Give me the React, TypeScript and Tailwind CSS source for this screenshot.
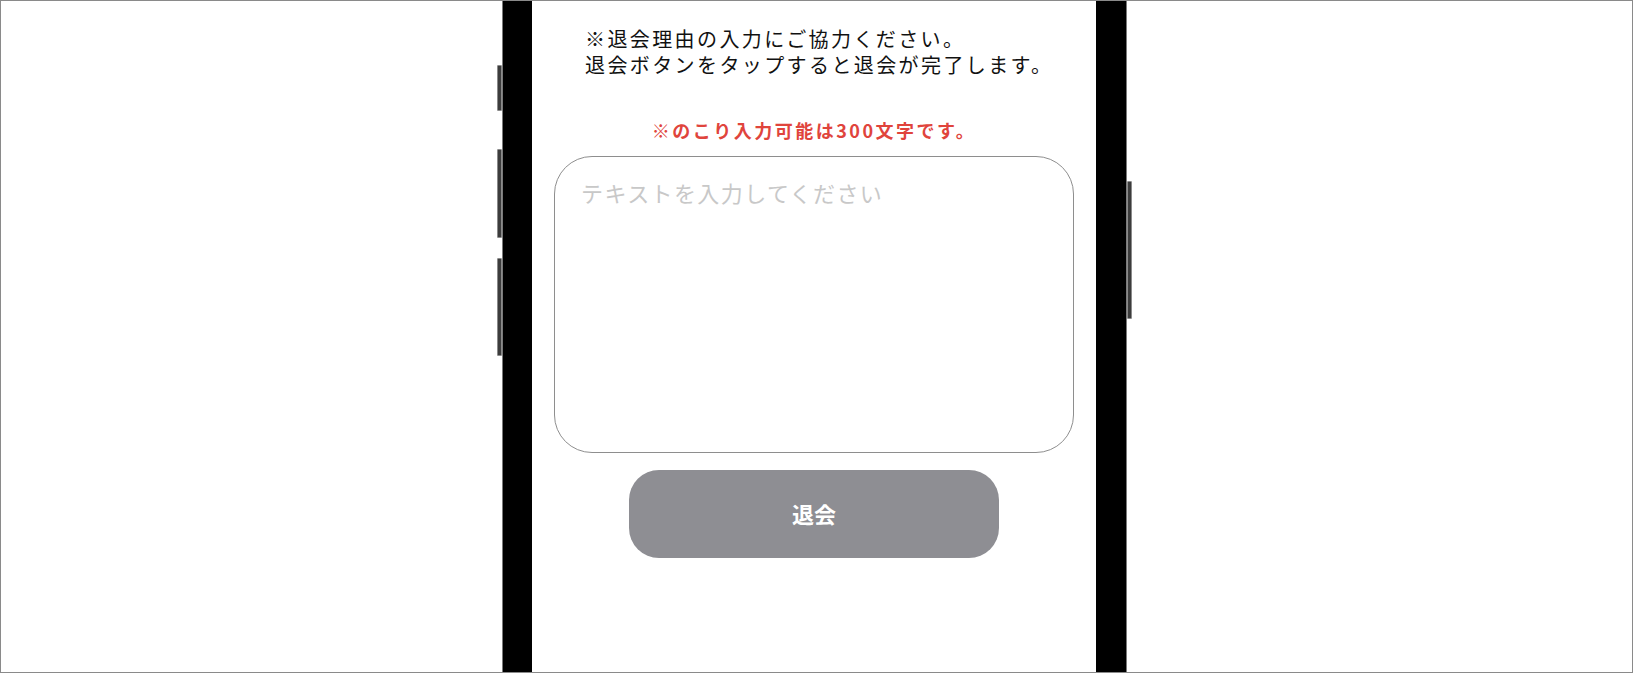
import { useState } from 'react'

const MAX_CHARS = 300

function SideButton({ className }: { className: string }) {
  return <div className={`w-[5px] rounded-[1px] bg-[#3c3c3c] border border-[#8a8a8a] ${className}`} />
}

export default function App() {
  const [reason, setReason] = useState('')
  const remaining = MAX_CHARS - reason.length

  return (
    <div
      className="w-[1633px] h-[673px] bg-white border border-[#8a8a8a] overflow-hidden flex pl-[496px]"
      style={{ fontFamily: '"Noto Sans CJK JP", "Noto Sans", sans-serif' }}
    >
      {/* left side buttons */}
      <div className="flex flex-col">
        <SideButton className="mt-[64px] h-[46px]" />
        <SideButton className="mt-[38px] h-[89px]" />
        <SideButton className="mt-[20px] h-[98px]" />
      </div>

      {/* left bezel */}
      <div className="w-[30px] h-full bg-black border-l border-[#7a7a7a]" />

      {/* screen */}
      <div className="w-[564px] h-full bg-white flex flex-col items-center">
        <div className="self-start pl-[53px] pt-[25px] text-[20px] leading-[26px] tracking-[2.4px] text-[#111]">
          <p>※退会理由の入力にご協力ください。</p>
          <p>退会ボタンをタップすると退会が完了します。</p>
        </div>

        <p className="mt-[40px] text-[18px] leading-[24px] font-bold tracking-[2.5px] text-[#e0443c]">
          ※のこり入力可能は{remaining}文字です。
        </p>

        <textarea
          value={reason}
          onChange={e => setReason(e.target.value.slice(0, MAX_CHARS))}
          placeholder="テキストを入力してください"
          className="mt-[14px] w-[520px] h-[297px] resize-none rounded-[38px] border border-[#8e8e8e] bg-white px-[26px] pt-[22px] text-[22px] leading-[26px] tracking-[1.4px] text-[#111] placeholder:text-[#c8c8c8] outline-none"
        />

        <button className="mt-[17px] w-[370px] h-[88px] rounded-[30px] bg-[#8e8e93] text-white text-[22px] leading-[28px] font-bold pb-[3px]">
          退会
        </button>
      </div>

      {/* right bezel */}
      <div className="w-[31px] h-full bg-black border-r border-[#7a7a7a]" />

      {/* right side button */}
      <div className="flex flex-col">
        <SideButton className="mt-[180px] h-[138px]" />
      </div>
    </div>
  )
}
